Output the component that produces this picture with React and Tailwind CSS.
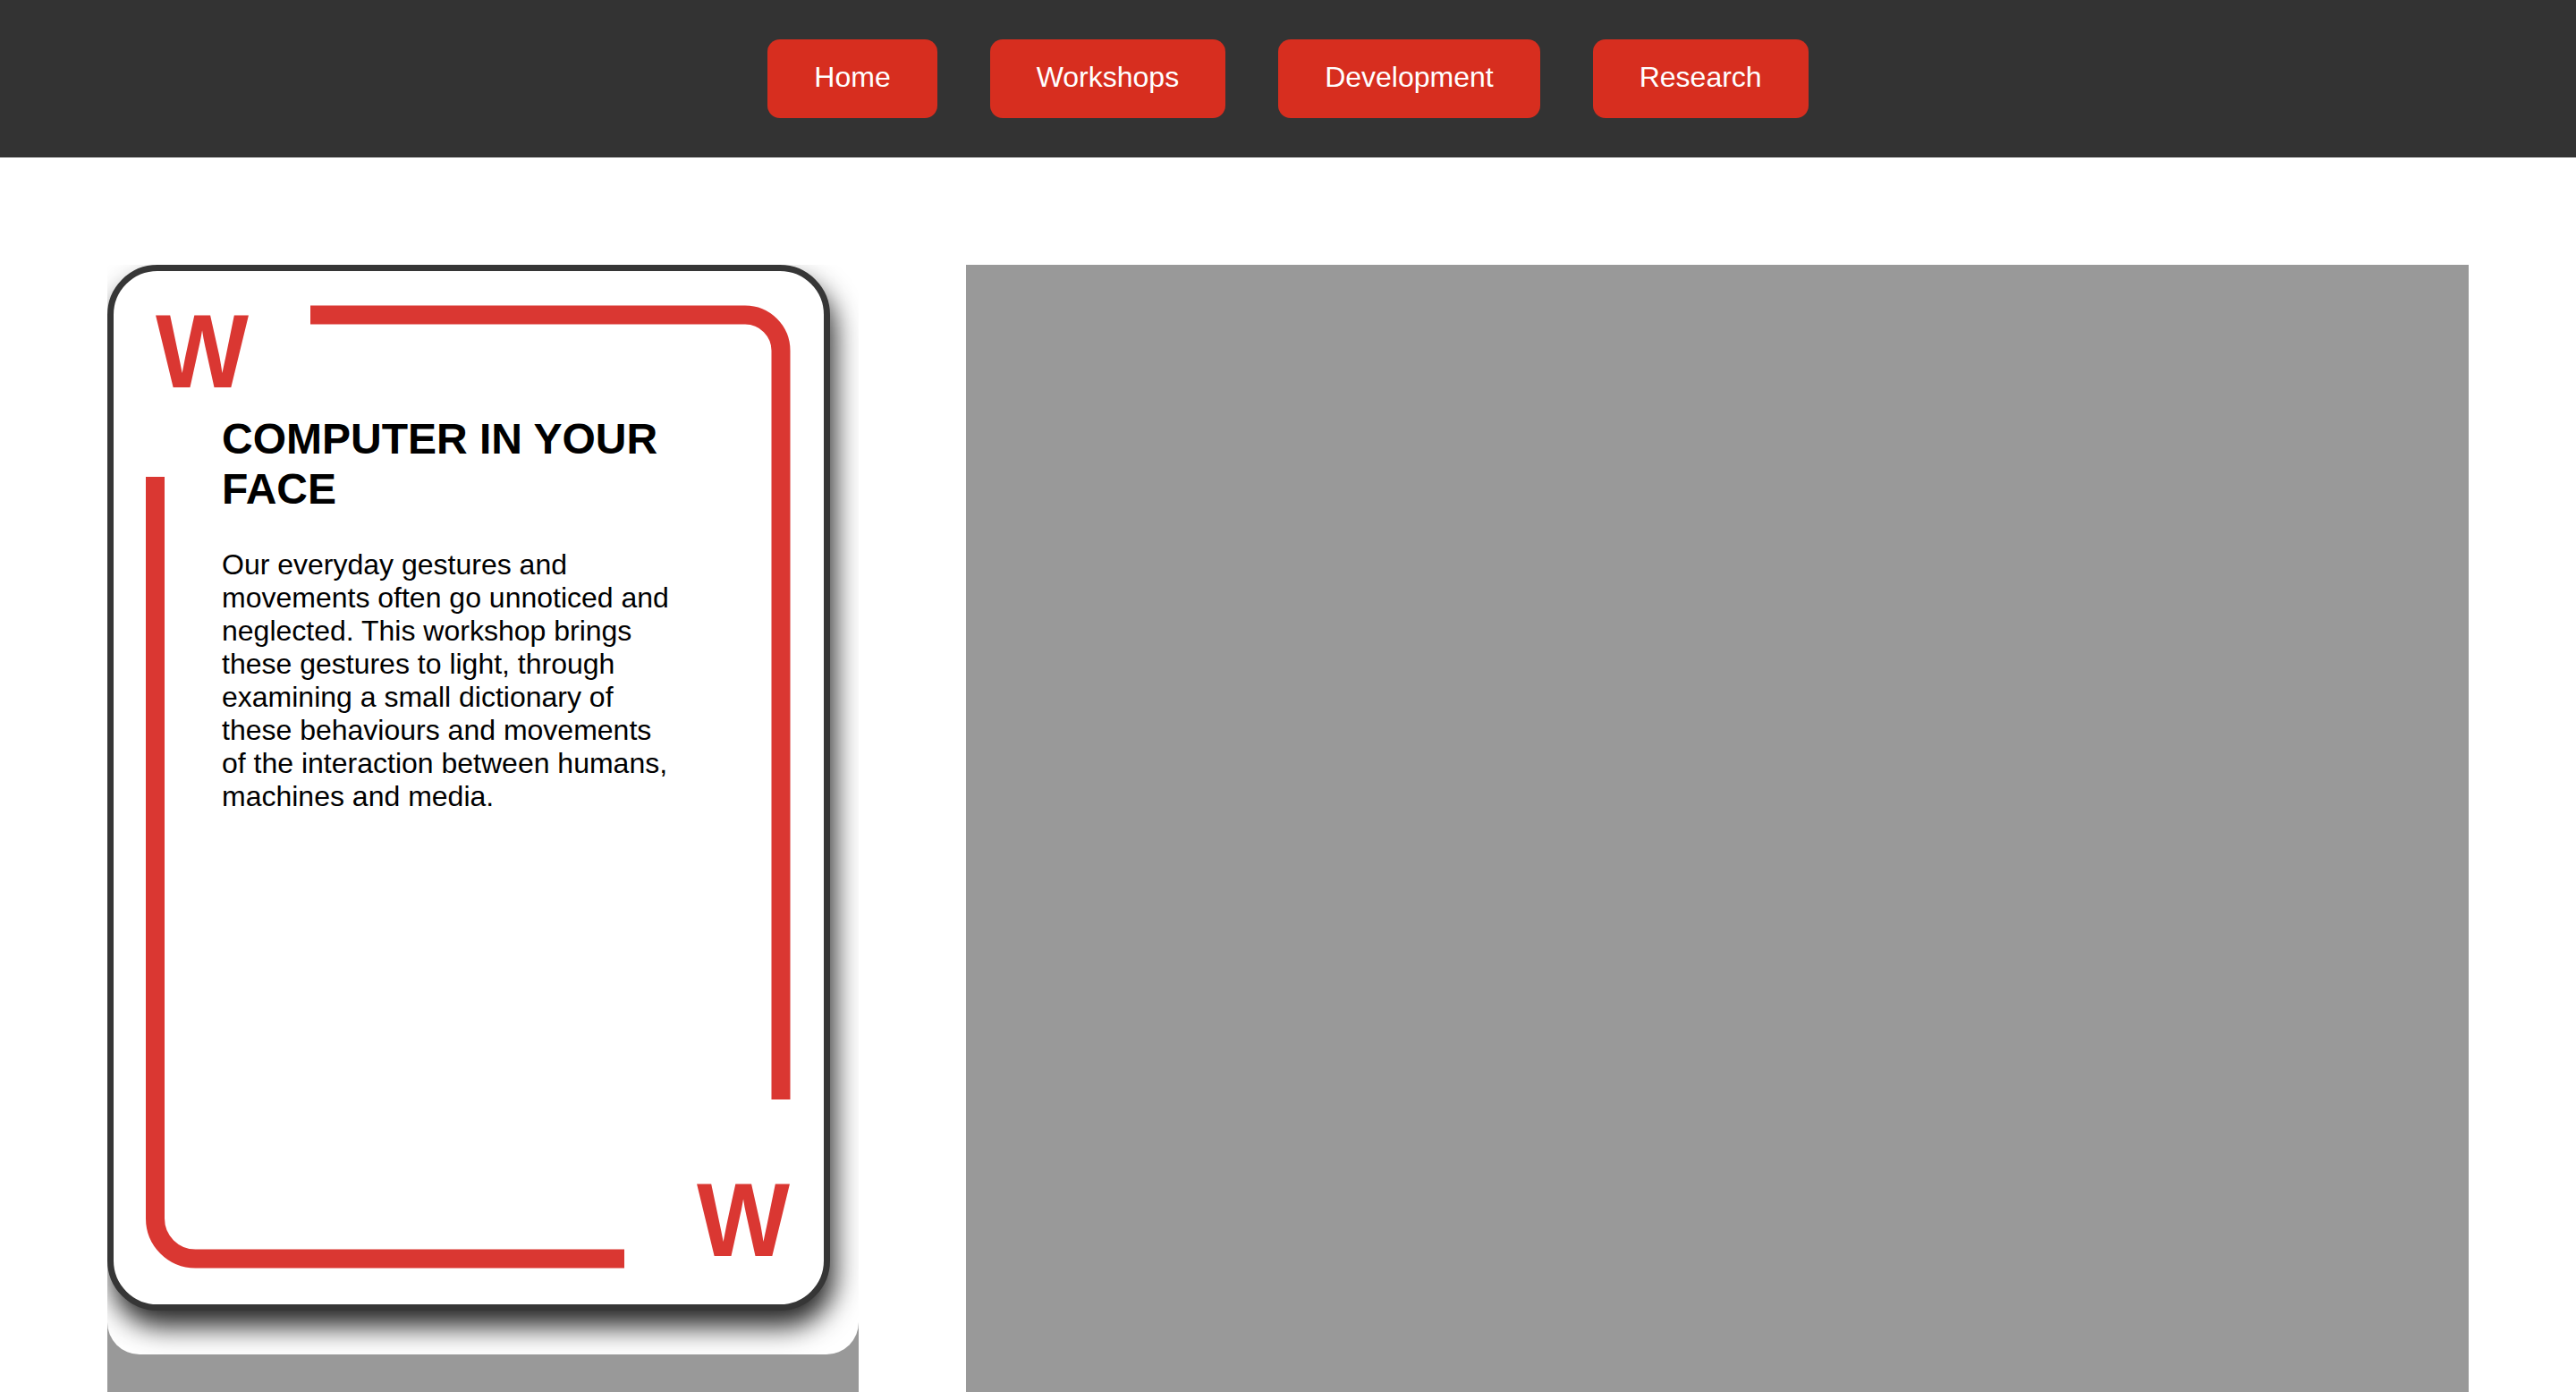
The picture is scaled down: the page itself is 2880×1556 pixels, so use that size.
const links = ["Home", "Workshops", "Development", "Research"];

const bodyLines = [
  "Our everyday gestures and",
  "movements often go unnoticed and",
  "neglected. This workshop brings",
  "these gestures to light, through",
  "examining a small dictionary of",
  "these behaviours and movements",
  "of the interaction between humans,",
  "machines and media.",
];

function WorkshopCard() {
  return (
    <div className="relative w-[808px] h-[1169px] bg-white border-[7px] border-[#363636] rounded-[56px] shadow-[5px_18px_30px_rgba(0,0,0,0.85)]">
      {/* red frame */}
      <svg
        className="absolute -left-[7px] -top-[7px]"
        width="808"
        height="1169"
        viewBox="0 0 808 1169"
        fill="none"
      >
        <path
          d="M227 56 H713 A40 40 0 0 1 753 96 V933"
          stroke="#da3732"
          strokeWidth="21"
        />
        <path
          d="M53.5 237 V1066 A45 45 0 0 0 98.5 1111 H578"
          stroke="#da3732"
          strokeWidth="21"
        />
      </svg>

      <span className="absolute left-[47px] top-[32px] text-[116px] leading-none font-bold text-[#da3732] scale-x-95 origin-left">
        W
      </span>
      <span className="absolute left-[652px] top-[1003px] text-[116px] leading-none font-bold text-[#da3732] scale-x-95 origin-left">
        W
      </span>

      <div className="relative pl-[121px] pt-[160px] text-black">
        <h2 className="text-[48px] leading-[56px] font-bold">
          COMPUTER IN YOUR
          <br />
          FACE
        </h2>
        <p className="mt-[38px] text-[32px] leading-[37px] whitespace-nowrap">
          {bodyLines.map((line) => (
            <span key={line} className="block">
              {line}
            </span>
          ))}
        </p>
      </div>
    </div>
  );
}

export default function App() {
  return (
    <div className="min-h-screen bg-white font-['Liberation_Sans',Arial,sans-serif]">
      <nav className="h-[176px] bg-[#333333] flex items-center justify-center gap-[59px]">
        {links.map((link) => (
          <a
            key={link}
            href="#"
            className="bg-[#d72e1f] text-white text-[32px] leading-[37px] px-[52px] pt-[24px] pb-[27px] rounded-[14px]"
          >
            {link}
          </a>
        ))}
      </nav>

      <main className="flex gap-[120px] px-[120px] pt-[120px]">
        <div className="w-[840px] h-[1260px] bg-[#999999]">
          <div className="h-[1218px] bg-white rounded-b-[36px] overflow-hidden">
            <WorkshopCard />
          </div>
        </div>
        <div className="flex-1 h-[1260px] bg-[#999999]" />
      </main>
    </div>
  );
}
